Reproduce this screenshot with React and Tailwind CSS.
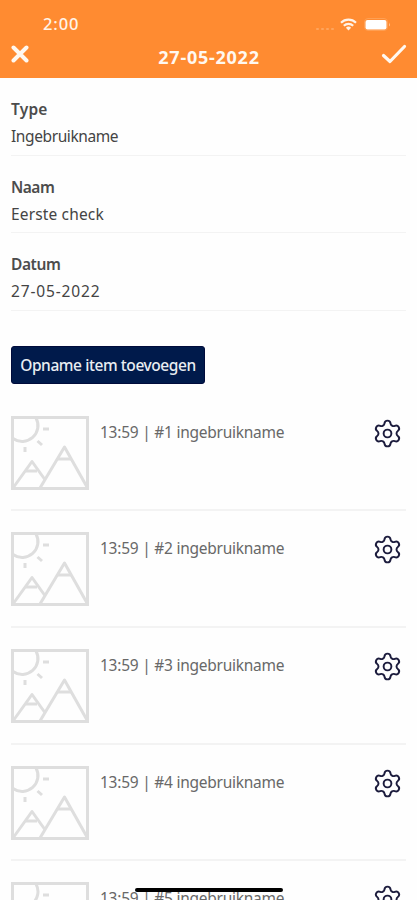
import { Settings } from 'lucide-react';

const fields = [
  { label: 'Type', value: 'Ingebruikname', labelClass: 'tracking-[0.2px]', valueClass: 'tracking-[-0.4px]' },
  { label: 'Naam', value: 'Eerste check', labelClass: 'tracking-[-0.5px]', valueClass: 'tracking-[0.15px]' },
  { label: 'Datum', value: '27-05-2022', labelClass: 'tracking-[-0.4px]', valueClass: 'tracking-[0.85px]' }
];

const items = [1, 2, 3, 4, 5];

function StatusBar() {
  return (
    <div className="flex h-[38px] items-end justify-between pr-[26px] pl-[43px]">
      <span className="text-[16.5px] leading-[28px] font-medium tracking-[0.9px] text-[#fff3e7]">2:00</span>
      <div className="flex h-[28px] items-center">
        <div className="mt-[9px] mr-[6px] flex gap-[2px]">
          {[0, 1, 2, 3].map((dot) => (
            <span key={dot} className="h-[2px] w-[3px] rounded-full bg-[#ffa45c]" />
          ))}
        </div>
        <svg className="mr-[7px] h-[13px] w-[17px]" viewBox="0 0 17 13" fill="none" stroke="#fff3e7" strokeWidth="2.2">
          <path d="M1 4.7a10.8 10.8 0 0 1 15 0" />
          <path d="M3.8 7.7a6.8 6.8 0 0 1 9.4 0" />
          <path d="M8.5 12.6 5.9 9.8a3.8 3.8 0 0 1 5.2 0z" fill="#fff3e7" stroke="none" />
        </svg>
        <svg className="h-[13px] w-[27px]" viewBox="0 0 27 13">
          <rect x="0.5" y="0.5" width="23" height="12" rx="3.5" fill="none" stroke="#ff9f52" />
          <rect x="1.5" y="2" width="21" height="9.5" rx="2" fill="#fff" />
          <path d="M25 4.5q1.7 2 0 4z" fill="#ffc598" />
        </svg>
      </div>
    </div>
  );
}

function Header() {
  return (
    <header className="h-[78px] bg-[#ff8b31]">
      <StatusBar />
      <div className="flex h-[38px] items-center justify-between pr-[10px] pl-[11px]">
        <svg className="h-[18px] w-[26px] -translate-y-[3px]" viewBox="0 0 26 18" fill="none" stroke="#fff8f0" strokeWidth="4" strokeLinecap="round">
          <path d="m2.5 2.5 13 13M15.5 2.5l-13 13" />
        </svg>
        <h1 className="text-[18px] font-bold tracking-[0.75px] text-[#fff8f0]">27-05-2022</h1>
        <svg className="h-[20px] w-[26px] -translate-y-[3px]" viewBox="0 0 26 20" fill="none" stroke="#fff8f0" strokeWidth="3.2" strokeLinecap="round" strokeLinejoin="round">
          <path d="M2.5 11.5 9 17.5 23.5 2.5" />
        </svg>
      </div>
    </header>
  );
}

function Field({ label, value, labelClass, valueClass }) {
  return (
    <div className="h-[77.6px] border-b border-[#f3f3f3] pt-[18px]">
      <div className={`text-[15.5px] leading-[27px] font-semibold text-[#4c4c4c] ${labelClass}`}>{label}</div>
      <div className={`text-[15.5px] leading-[27px] text-[#444] ${valueClass}`}>{value}</div>
    </div>
  );
}

function Placeholder() {
  return (
    <svg className="h-[74px] w-[78px] flex-none" viewBox="0 0 78 74" fill="none" stroke="#dedede" strokeWidth="3">
      <rect x="1.5" y="1.5" width="75" height="71" />
      <path d="M25 2A15.8 15.8 0 0 1 2 22.5" />
      <path d="M32 13h6M26.500 25l4.500 4M14 31v5" />
      <path d="M2 72 21 45.500 33.500 63M29 72 53.500 31 76 71" strokeLinejoin="round" />
      <path d="M15 55h11M46.500 43h14" />
    </svg>
  );
}

function Item({ number }) {
  return (
    <li className="flex h-[116.6px] items-start border-b-2 border-[#f3f3f3] pt-[21px]">
      <Placeholder />
      <span className="mt-[3px] ml-[11px] text-[15.5px] leading-[27px] tracking-[-0.25px] text-[#686868]">
        13:59 | #{number} ingebruikname
      </span>
      <Settings className="mt-[2px] mr-[3px] ml-auto size-[31px] text-[#1c1c3d]" strokeWidth={1.5} />
    </li>
  );
}

export default function App() {
  return (
    <div className="relative h-[900px] w-[417px] overflow-hidden bg-[#fefefe] font-['Noto_Sans',sans-serif]">
      <Header />
      <main className="pr-[11px] pl-[11px]">
        {fields.map((field) => (
          <Field key={field.label} {...field} />
        ))}
        <button className="mt-[35px] block h-[38px] w-[194px] rounded-[3px] border border-[#000b3b] bg-[#001a4b] pt-[2px] text-[15.5px] font-medium tracking-[-0.42px] whitespace-nowrap text-[#e9edf2]">
          Opname item toevoegen
        </button>
        <ul className="mt-[11px]">
          {items.map((number) => (
            <Item key={number} number={number} />
          ))}
        </ul>
      </main>
      {/* home indicator */}
      <div className="absolute top-[888px] left-[135px] h-[4px] w-[148px] rounded-full bg-black" />
    </div>
  );
}
